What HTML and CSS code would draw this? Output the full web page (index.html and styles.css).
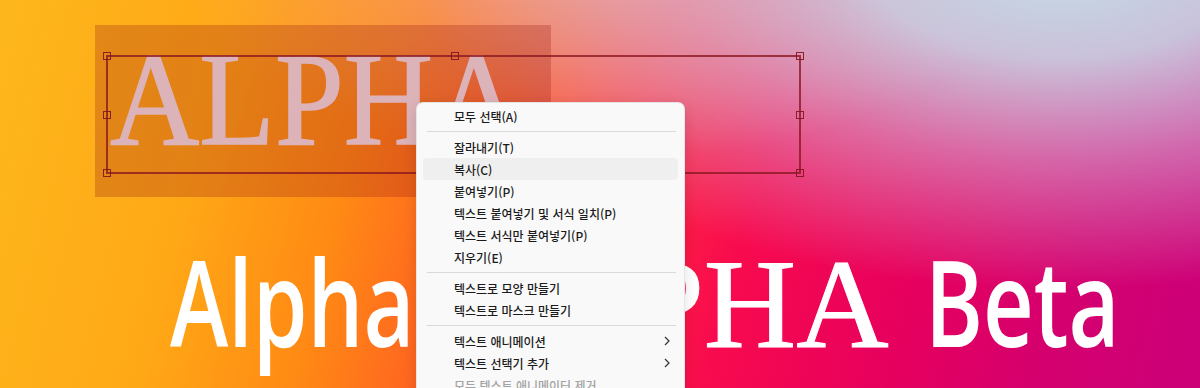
FILE: index.html
```html
<!DOCTYPE html>
<html lang="ko">
<head>
<meta charset="utf-8">
<title>Canvas context menu</title>
<link rel="stylesheet" href="styles.css">
</head>
<body>
<div class="canvas">
  <div class="layer-rect"></div>
  <div class="layer-title"><span class="title-text">ALPHA</span></div>
  <div class="selection">
    <span class="handle h-tl"></span>
    <span class="handle h-tm"></span>
    <span class="handle h-tr"></span>
    <span class="handle h-ml"></span>
    <span class="handle h-mr"></span>
    <span class="handle h-bl"></span>
    <span class="handle h-br"></span>
  </div>
  <div class="layer-line">
    <div class="word word-alpha"><span class="sans">Alpha</span></div>
    <div class="word word-serif"><span class="serif">ALPHA</span></div>
    <div class="word word-beta"><span class="sans">Beta</span></div>
  </div>

  <div class="menu">
    <div class="item">모두 선택(A)</div>
    <div class="sep"></div>
    <div class="item">잘라내기(T)</div>
    <div class="item hover">복사(C)</div>
    <div class="item">붙여넣기(P)</div>
    <div class="item">텍스트 붙여넣기 및 서식 일치(P)</div>
    <div class="item">텍스트 서식만 붙여넣기(P)</div>
    <div class="item">지우기(E)</div>
    <div class="sep"></div>
    <div class="item">텍스트로 모양 만들기</div>
    <div class="item">텍스트로 마스크 만들기</div>
    <div class="sep"></div>
    <div class="item sub">텍스트 애니메이션<svg class="chev" viewBox="0 0 6 10" width="6" height="10"><path d="M1 1 L5 5 L1 9" fill="none" stroke="#333" stroke-width="1.2"/></svg></div>
    <div class="item sub">텍스트 선택기 추가<svg class="chev" viewBox="0 0 6 10" width="6" height="10"><path d="M1 1 L5 5 L1 9" fill="none" stroke="#333" stroke-width="1.2"/></svg></div>
    <div class="item disabled">모두 텍스트 애니메이터 제거</div>
  </div>
</div>
</body>
</html>
```

FILE: styles.css
```css
html, body {
  margin: 0;
  padding: 0;
  width: 1200px;
  height: 388px;
  overflow: hidden;
}

.canvas {
  position: relative;
  width: 1200px;
  height: 388px;
  overflow: hidden;
  background:
    radial-gradient(ellipse 640px 330px at 1060px -40px,
      rgba(196, 222, 232, 1) 0%,
      rgba(200, 214, 230, 0.9) 30%,
      rgba(210, 188, 220, 0.55) 60%,
      rgba(220, 170, 210, 0) 100%),
    radial-gradient(ellipse 420px 190px at 600px -30px,
      rgba(238, 178, 160, 0.7) 0%,
      rgba(238, 178, 160, 0) 100%),
    linear-gradient(104deg,
      #fdb71c 0%,
      #ffa816 18%,
      #ff8a14 30%,
      #ff5a24 42%,
      #ff2a40 52%,
      #f80a4e 62%,
      #e6005e 76%,
      #d4006f 88%,
      #cc0078 100%);
}

.layer-rect {
  position: absolute;
  left: 95px;
  top: 25px;
  width: 456px;
  height: 172px;
  background: rgba(156, 28, 20, 0.28);
}

.layer-title {
  position: absolute;
  left: 110px;
  top: 33px;
  line-height: 1;
  white-space: nowrap;
}

.title-text {
  display: inline-block;
  font-family: "Liberation Serif", "Times New Roman", serif;
  font-size: 133px;
  line-height: 1;
  color: #dcb3b9;
  -webkit-text-stroke: 1.5px #dcb3b9;
  transform: scaleX(0.93);
  transform-origin: 0 50%;
}

.selection {
  position: absolute;
  left: 106px;
  top: 55px;
  width: 695px;
  height: 119px;
  box-sizing: border-box;
  border: 2px solid rgba(140, 24, 34, 0.8);
}

.handle {
  position: absolute;
  width: 8px;
  height: 8px;
  box-sizing: border-box;
  border: 1.5px solid rgba(130, 20, 30, 0.9);
}
.h-tl { left: -5px; top: -5px; }
.h-tm { left: 343px; top: -5px; }
.h-tr { right: -5px; top: -5px; }
.h-ml { left: -5px; top: 53.5px; }
.h-mr { right: -5px; top: 53.5px; }
.h-bl { left: -5px; bottom: -5px; }
.h-br { right: -5px; bottom: -5px; }

.layer-line {
  position: absolute;
  left: 170px;
  top: 240px;
  display: flex;
  align-items: baseline;
  white-space: nowrap;
  color: #ffffff;
  line-height: 1;
}

.word {
  flex: none;
}
.word-alpha { width: 250px; }
.word-serif { width: 427px; margin-left: 42px; }
.word-beta { width: 195px; margin-left: 36px; }

.sans {
  display: inline-block;
  font-family: "Open Sans", "Noto Sans", sans-serif;
  font-weight: 600;
  font-size: 119px;
  line-height: 1;
  transform: scaleX(0.74);
  transform-origin: 0 50%;
}

.serif {
  display: inline-block;
  font-family: "Liberation Serif", "Times New Roman", serif;
  font-size: 128px;
  line-height: 1;
  -webkit-text-stroke: 1px #ffffff;
}

.menu {
  position: absolute;
  left: 416px;
  top: 102px;
  width: 269px;
  height: 320px;
  box-sizing: border-box;
  padding: 2px 0 0;
  background: #f9f9f9;
  border: 1px solid rgba(0, 0, 0, 0.08);
  border-radius: 7px;
  box-shadow: 0 4px 14px rgba(0, 0, 0, 0.12);
  font-family: "Noto Sans CJK KR", "Noto Sans", sans-serif;
  font-size: 12px;
  font-weight: 500;
  color: #1b1b1b;
}

.item {
  position: relative;
  display: flex;
  align-items: center;
  height: 22px;
  margin: 0 6px;
  padding-left: 31px;
  border-radius: 4px;
  white-space: nowrap;
}

.item.hover {
  background: #efefef;
}

.item.disabled {
  color: #a3a3a3;
}

.chev {
  position: absolute;
  right: 8px;
  top: 6px;
}

.sep {
  height: 1px;
  margin: 4px 8px 4px 10px;
  background: #d9d9d9;
}
```
